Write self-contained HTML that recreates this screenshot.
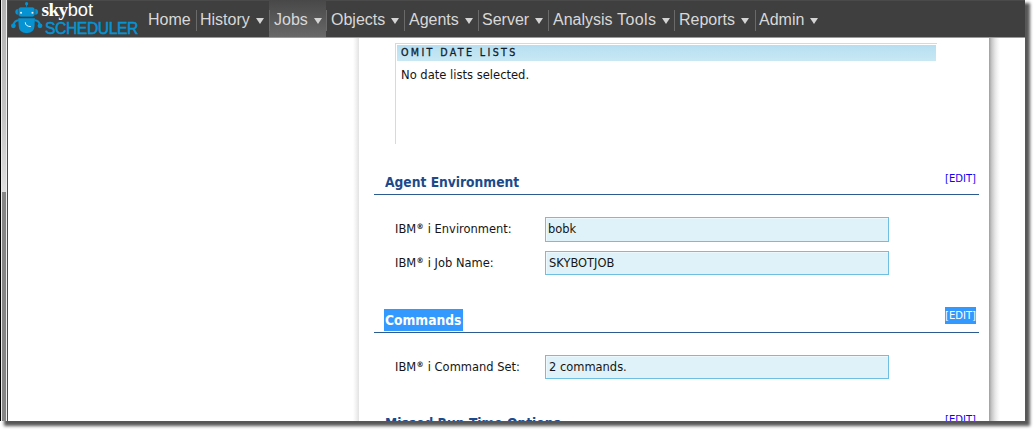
<!DOCTYPE html>
<html><head><meta charset="utf-8">
<style>
*{margin:0;padding:0;box-sizing:border-box}
html,body{width:1034px;height:430px;overflow:hidden;background:#fff}
body{position:relative;font-family:"DejaVu Sans","Liberation Sans",sans-serif;font-size:12px;color:#111}
.abs{position:absolute}
#win{left:1px;top:0;width:1024px;height:421px;background:#fff;box-shadow:4px 4px 3px 1px rgba(0,0,0,.66)}
#nav{left:8px;top:0;width:1017px;height:38px;background:#3f3f3f;border-bottom:1px solid #9a9a9a;box-shadow:inset 0 1px 0 #4a4a4a}
#nav .it{position:absolute;top:1px;height:37px;line-height:37px;font-family:"Liberation Sans",sans-serif;font-size:16px;color:#d8d8d8;white-space:nowrap}
#nav .sep{position:absolute;top:10px;width:1px;height:21px;background:#6a6a6a}
.tri{display:inline-block;width:0;height:0;border-left:4px solid transparent;border-right:4px solid transparent;border-top:6px solid #d4d4d4;margin-left:6px;vertical-align:middle;position:relative;top:0}
.t{position:absolute;white-space:nowrap;transform:scaleX(.955);transform-origin:0 0;line-height:16px;height:16px}
.lbl{font-size:12px;color:#151515}
.reg{font-size:7.5px;font-weight:bold;position:relative;top:-4px;margin:0 .6px 0 .3px}
.box{position:absolute;left:545px;width:344px;height:24px;background:#dff2f9;border:1px solid #6fbfe2;box-shadow:inset 1px 1px 0 #edf8fc}
.h{font-weight:bold;font-size:13.5px;color:#1c4a8a;left:384.6px;transform:scaleX(.912)}
.rule{position:absolute;left:374px;width:605px;height:1px;background:#2c5b90}
.edit{font-size:10.5px;color:#1400f5;left:944.5px}
</style></head><body>
<div id="win" class="abs"></div>
<!-- left frame -->
<div class="abs" style="left:0;top:0;width:1px;height:421px;background:#000"></div>
<div class="abs" style="left:1px;top:0;width:1px;height:421px;background:#ececec"></div>
<div class="abs" style="left:2px;top:0;width:4px;height:192px;background:linear-gradient(#b2b2b2,#c4c4c4 60%,#dedede)"></div>
<div class="abs" style="left:2px;top:192px;width:4px;height:229px;background:#868686"></div>
<div class="abs" style="left:6px;top:0;width:1px;height:421px;background:#ececec"></div>
<div class="abs" style="left:7px;top:0;width:1px;height:421px;background:#4a4a4a"></div>
<!-- content panel shadows -->
<div class="abs" style="left:353px;top:38px;width:6px;height:383px;background:linear-gradient(90deg,#fff,#f2f2f2 50%,#e2e2e2)"></div>
<div class="abs" style="left:989px;top:38px;width:11px;height:383px;background:linear-gradient(90deg,#9e9e9e,#c8c8c8 25%,#e6e6e6 55%,#f6f6f6 80%,#fff)"></div>

<div id="nav" class="abs">
 <div class="abs" style="left:261px;top:0;width:57px;height:37px;background:linear-gradient(#484848,#686868)"></div>
 <svg class="abs" style="left:0;top:0" width="44" height="38" viewBox="0 0 44 38">
  <g fill="#0593d3">
   <circle cx="18.6" cy="3.7" r="1.6"/>
   <rect x="18.1" y="4.5" width="1" height="3"/>
   <circle cx="10.2" cy="11.8" r="2.9"/>
   <circle cx="27.2" cy="11.8" r="2.9"/>
   <rect x="10.3" y="7" width="16.6" height="9.9" rx="2.6" stroke="#3e3e3e" stroke-width="0.6"/>
   <path d="M10.3,18.2 H26.9 L26.5,26 a7,7 0 0 1 -7,7.1 h-1.8 a7,7 0 0 1 -7,-7.1 Z"/>
   <circle cx="5.4" cy="25.8" r="2.4"/>
   <circle cx="32" cy="25.8" r="2.4"/>
  </g>
  <g fill="none" stroke="#0593d3" stroke-width="2.1">
   <path d="M10.8,20.2 Q6.4,20.6 5.5,24.8"/>
   <path d="M26.6,20.2 Q31,20.6 31.9,24.8"/>
  </g>
  <rect x="12.2" y="11.9" width="1.7" height="1.7" fill="#fff"/>
  <rect x="23.6" y="11.9" width="1.7" height="1.7" fill="#fff"/>
  <path d="M17.3,22.3 Q17.3,26.4 22.8,26.6" fill="none" stroke="#fff" stroke-width="0.9"/>
 </svg>
 <div class="abs" style="left:33.5px;top:-2px;height:24px;line-height:24px;font-family:'Liberation Serif',serif;font-size:19.5px;color:#fff;letter-spacing:-0.67px;white-space:nowrap"><b>sky</b><span style="font-family:'Liberation Sans',sans-serif;font-weight:normal;font-size:18.3px;letter-spacing:0">bot</span></div>
 <div class="abs" style="left:37px;top:19.5px;height:18px;line-height:18px;font-family:'Liberation Sans',sans-serif;font-size:15.6px;letter-spacing:-0.35px;color:#0593d3;-webkit-text-stroke:0.55px #0593d3;white-space:nowrap">SCHEDULER</div>
 <div class="it" style="left:140px">Home</div><div class="sep" style="left:188px"></div>
 <div class="it" style="left:192px">History<span class="tri"></span></div><div class="sep" style="left:261px"></div>
 <div class="it" style="left:266px">Jobs<span class="tri"></span></div><div class="sep" style="left:318px"></div>
 <div class="it" style="left:323px">Objects<span class="tri"></span></div><div class="sep" style="left:396px"></div>
 <div class="it" style="left:401px">Agents<span class="tri"></span></div><div class="sep" style="left:470px"></div>
 <div class="it" style="left:474px">Server<span class="tri"></span></div><div class="sep" style="left:540px"></div>
 <div class="it" style="left:545px">Analysis <span style="letter-spacing:.4px">Tools</span><span class="tri"></span></div><div class="sep" style="left:666px"></div>
 <div class="it" style="left:671px">Reports<span class="tri"></span></div><div class="sep" style="left:746.5px"></div>
 <div class="it" style="left:751px">Admin<span class="tri"></span></div>
</div>

<!-- omit date lists -->
<div class="abs" style="left:394.6px;top:43px;width:542px;height:1px;background:#bfe2f1"></div>
<div class="abs" style="left:394.6px;top:43px;width:1px;height:101px;background:#bfe2f1"></div>
<div class="abs" style="left:397px;top:45px;width:539px;height:16px;background:linear-gradient(#b7dff1,#c8e8f4)"></div>
<div class="t" style="left:401px;top:45px;font-size:10px;letter-spacing:2.46px;color:#101c2c;-webkit-text-stroke:.3px #101c2c">OMIT DATE LISTS</div>
<div class="t lbl" style="left:400.5px;top:67px;transform:scaleX(.962)">No date lists selected.</div>

<div class="t h" style="top:174px">Agent Environment</div>
<div class="rule" style="top:194px"></div>
<div class="t edit" style="top:170px">[EDIT]</div>

<div class="t lbl" style="left:394.6px;top:221px">IBM<span class="reg">®</span> i Environment:</div>
<div class="box" style="top:217px;height:25px"></div>
<div class="t lbl" style="left:547.8px;top:221px">bobk</div>
<div class="t lbl" style="left:394.6px;top:255px">IBM<span class="reg">®</span> i Job Name:</div>
<div class="box" style="top:251px"></div>
<div class="t lbl" style="left:548.5px;top:255px">SKYBOTJOB</div>

<div class="abs" style="left:384px;top:309px;width:79px;height:22px;background:#3399ff"></div>
<div class="t h" style="top:312px;color:#fff">Commands</div>
<div class="rule" style="top:332px"></div>
<div class="abs" style="left:945px;top:307px;width:31px;height:17px;background:#3399ff"></div>
<div class="t edit" style="top:307.4px;color:#fff">[EDIT]</div>

<div class="t lbl" style="left:394.6px;top:359px">IBM<span class="reg">®</span> i Command Set:</div>
<div class="box" style="top:355px"></div>
<div class="t lbl" style="left:548.5px;top:359px">2 commands.</div>

<div class="abs" style="left:360px;top:410px;width:629px;height:11px;overflow:hidden">
 <div class="t h" style="left:25px;top:5px">Missed Run Time Options</div>
 <div class="t edit" style="left:584.5px;top:1px">[EDIT]</div>
</div>
</body></html>
